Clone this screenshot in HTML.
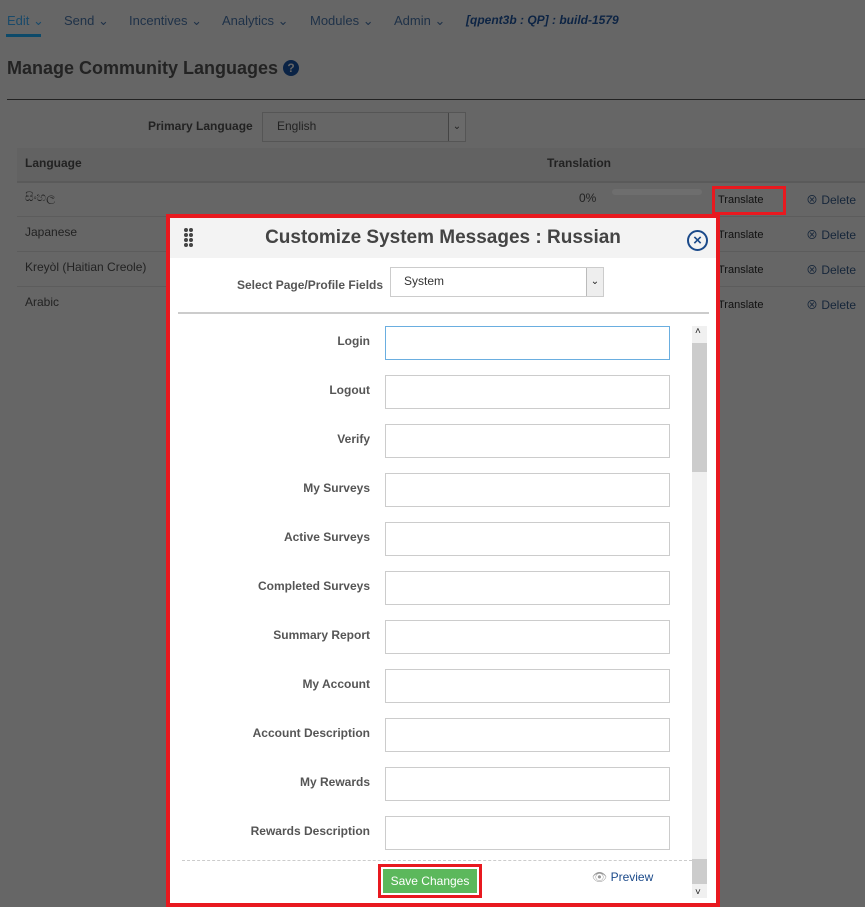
<!DOCTYPE html>
<html><head><style>
body{margin:0;width:865px;height:907px;overflow:hidden;background:#666;font-family:"Liberation Sans","Noto Sans CJK SC",sans-serif;position:relative;color:#222}
.a{position:absolute}
.nav span{position:absolute;top:13px;font-size:13px;color:#1e3148}
.row{position:absolute;left:17px;right:0;height:34px;border-bottom:1px solid #5c5c5c;font-size:12px;color:#222}
.tr{position:absolute;left:718px;font-size:11px;color:#111}
.del{position:absolute;left:806px;font-size:12px;color:#16263a}
.lbl{position:absolute;right:495px;font-size:12px;font-weight:bold;color:#555;text-align:right;white-space:nowrap}
.inp{position:absolute;left:385px;width:283px;height:32px;border:1px solid #ccc;background:#fff}
.dot{position:absolute;width:4px;height:4px;border-radius:50%;background:#444}
</style></head><body>
<div class="nav">
<span style="left:7px;color:#1a4a6a">Edit ⌄</span>
<span style="left:64px">Send ⌄</span>
<span style="left:129px">Incentives ⌄</span>
<span style="left:222px">Analytics ⌄</span>
<span style="left:310px">Modules ⌄</span>
<span style="left:394px">Admin ⌄</span>
<span style="left:466px;font-weight:bold;font-style:italic;color:#0d2444;font-size:12px">[qpent3b : QP] : build-1579</span>
</div>
<div class="a" style="left:6px;top:34px;width:35px;height:3px;background:#0d4a6a"></div>
<div class="a" style="left:7px;top:58px;font-size:18px;font-weight:bold;color:#232323">Manage Community Languages <span style="display:inline-block;width:16px;height:16px;border-radius:50%;background:#0a2345;color:#666;font-size:12px;text-align:center;line-height:16px;vertical-align:2px">?</span></div>
<div class="a" style="left:7px;top:99px;width:858px;height:1px;background:#222"></div>
<div class="a" style="left:148px;top:119px;font-size:12px;font-weight:bold;color:#222">Primary Language</div>
<div class="a" style="left:262px;top:112px;width:202px;height:28px;border:1px solid #555;background:#666"><span style="position:absolute;left:14px;top:6px;font-size:12px;color:#222">English</span><span style="position:absolute;right:0;top:0;width:16px;height:28px;border-left:1px solid #444;background:#6a6a6a;font-size:10px;text-align:center;line-height:28px">⌄</span></div>
<div class="a" style="left:17px;top:148px;width:848px;height:33px;background:#626262;border-bottom:2px solid #5a5a5a"></div>
<div class="a" style="left:25px;top:156px;font-size:12px;font-weight:bold">Language</div>
<div class="a" style="left:547px;top:156px;font-size:12px;font-weight:bold">Translation</div>
<div class="row" style="top:182px"><span class="a" style="left:8px;top:8px">සිංහල</span><span class="a" style="left:562px;top:9px">0%</span><span class="a" style="left:595px;top:7px;width:90px;height:6px;border-radius:3px;background:#6e6e6e"></span></div>
<div class="row" style="top:217px"><span class="a" style="left:8px;top:8px">Japanese</span></div>
<div class="row" style="top:252px"><span class="a" style="left:8px;top:8px">Kreyòl (Haitian Creole)</span></div>
<div class="a" style="left:25px;top:295px;font-size:12px">Arabic</div>
<span class="tr" style="top:194px">Translate</span><span class="tr" style="top:229px">Translate</span><span class="tr" style="top:264px">Translate</span><span class="tr" style="top:299px">Translate</span>
<span class="del" style="top:191px">⊗ Delete</span><span class="del" style="top:226px">⊗ Delete</span><span class="del" style="top:261px">⊗ Delete</span><span class="del" style="top:296px">⊗ Delete</span>
<div class="a" style="left:712px;top:186px;width:68px;height:23px;border:3px solid #e8191f"></div>
<div class="a" style="left:166px;top:214px;width:546px;height:685px;border:4px solid #e8191f;background:#fff">
<div class="a" style="left:0;top:0;width:546px;height:40px;background:#f3f3f3"></div>
<div class="dot" style="left:14px;top:10px"></div><div class="dot" style="left:19px;top:10px"></div>
<div class="dot" style="left:14px;top:15px"></div><div class="dot" style="left:19px;top:15px"></div>
<div class="dot" style="left:14px;top:20px"></div><div class="dot" style="left:19px;top:20px"></div>
<div class="dot" style="left:14px;top:25px"></div><div class="dot" style="left:19px;top:25px"></div>
<div class="a" style="left:0;width:546px;top:9px;text-align:center;font-size:19px;font-weight:bold;color:#444">Customize System Messages : Russian</div>
<div class="a" style="left:517px;top:12px;width:17px;height:17px;border:2px solid #1b4a8a;border-radius:50%;text-align:center;line-height:17px;font-size:15px;font-weight:bold;color:#1b4a8a">×</div>
<div class="a" style="left:67px;top:60px;font-size:12px;font-weight:bold;color:#555">Select Page/Profile Fields</div>
<div class="a" style="left:220px;top:49px;width:212px;height:28px;border:1px solid #ccc"><span style="position:absolute;left:13px;top:6px;font-size:12px;color:#333">System</span><span style="position:absolute;right:0;top:0;width:16px;height:28px;border-left:1px solid #bbb;background:#eee;font-size:10px;text-align:center;line-height:28px">⌄</span></div>
<div class="a" style="left:8px;top:94px;width:531px;height:2px;background:#ccc"></div>
<div class="a" style="left:12px;top:642px;width:510px;border-top:1px dashed #ccc"></div>
<div class="a" style="left:522px;top:108px;width:15px;height:572px;background:#f0f0f0"><div style="position:absolute;top:17px;width:15px;height:129px;background:#ccc"></div><div style="position:absolute;top:533px;width:15px;height:25px;background:#ccc"></div><span style="position:absolute;top:0;left:3px;font-size:10px">˄</span><span style="position:absolute;bottom:0;left:3px;font-size:10px">˅</span></div>
</div>
<div class="lbl" style="top:334px">Login</div><div class="inp" style="top:326px;border-color:#6aaee0"></div>
<div class="lbl" style="top:383px">Logout</div><div class="inp" style="top:375px"></div>
<div class="lbl" style="top:432px">Verify</div><div class="inp" style="top:424px"></div>
<div class="lbl" style="top:481px">My Surveys</div><div class="inp" style="top:473px"></div>
<div class="lbl" style="top:530px">Active Surveys</div><div class="inp" style="top:522px"></div>
<div class="lbl" style="top:579px">Completed Surveys</div><div class="inp" style="top:571px"></div>
<div class="lbl" style="top:628px">Summary Report</div><div class="inp" style="top:620px"></div>
<div class="lbl" style="top:677px">My Account</div><div class="inp" style="top:669px"></div>
<div class="lbl" style="top:726px">Account Description</div><div class="inp" style="top:718px"></div>
<div class="lbl" style="top:775px">My Rewards</div><div class="inp" style="top:767px"></div>
<div class="lbl" style="top:824px">Rewards Description</div><div class="inp" style="top:816px"></div>
<div class="a" style="left:378px;top:864px;width:98px;height:28px;border:3px solid #e8191f"><div style="position:absolute;left:2px;top:2px;width:94px;height:24px;background:#5cb85c;color:#fff;font-size:12px;text-align:center;line-height:24px">Save Changes</div></div>
<div class="a" style="left:592px;top:870px;font-size:12px;color:#1b4a8a"><span style="color:#999">👁</span> Preview</div>
</body></html>
